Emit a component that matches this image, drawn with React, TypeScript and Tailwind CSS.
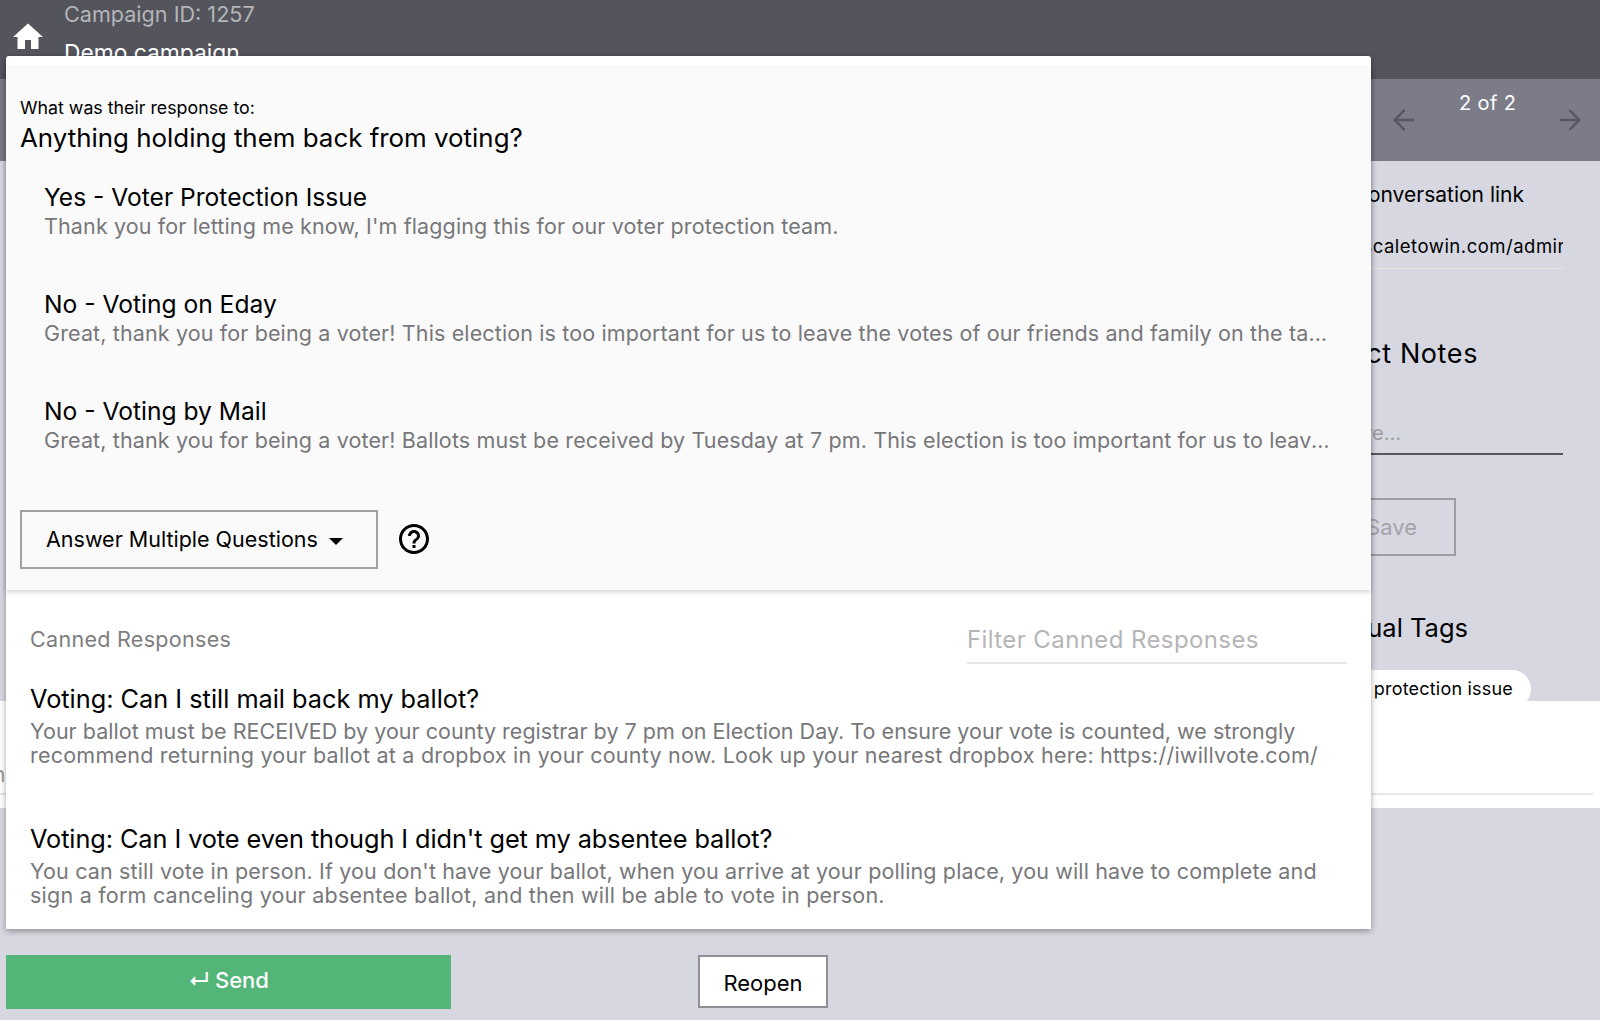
import { ArrowLeft, ArrowRight } from 'lucide-react';
import { MdHome, MdHelpOutline } from 'react-icons/md';

const answers = [
  {
    title: 'Yes - Voter Protection Issue',
    text: "Thank you for letting me know, I'm flagging this for our voter protection team.",
  },
  {
    title: 'No - Voting on Eday',
    text: 'Great, thank you for being a voter! This election is too important for us to leave the votes of our friends and family on the table this time around.',
  },
  {
    title: 'No - Voting by Mail',
    text: 'Great, thank you for being a voter! Ballots must be received by Tuesday at 7 pm. This election is too important for us to leave the votes of our friends on the table.',
  },
];

export default function App() {
  return (
    <div className="relative w-[1600px] h-[1020px] overflow-hidden bg-[#d6d7e0] flex flex-col font-['Inter',sans-serif] text-black">
      <header className="h-[79px] shrink-0 bg-[#53545c] flex items-start pl-[10px]">
        <MdHome className="w-[36px] h-[36px] mt-[19px] text-white shrink-0" />
        <div className="ml-[18px] whitespace-nowrap">
          <div className="text-[21.6px] leading-[28px] text-[#b4b5b8]">Campaign ID: 1257</div>
          <div className="text-[22.8px] leading-[28px] text-white mt-[11px]">Demo campaign</div>
        </div>
      </header>

      <div className="h-[82px] shrink-0 bg-[#7b7c88] flex justify-end pr-[14px]">
        <div className="w-[198px] relative flex items-center justify-between">
          <ArrowLeft className="w-[32px] h-[32px] text-[#55565f]" strokeWidth={1.8} />
          <div className="absolute left-[71px] top-[10px] text-[20px] leading-[28px] text-white tracking-[0.4px]">2 of 2</div>
          <ArrowRight className="w-[32px] h-[32px] text-[#55565f]" strokeWidth={1.8} />
        </div>
      </div>

      <div className="h-[540px] shrink-0 overflow-hidden flex justify-end pr-[37px]">
        <div className="w-[290px] flex flex-col items-end">
          <div className="shrink-0 w-full text-right text-[21px] leading-[28px] pr-[39px] mt-[20px] whitespace-nowrap">Conversation link</div>
          <div className="shrink-0 w-full h-[38px] mt-[22px] border-b border-[#e6e6df] overflow-hidden flex justify-end">
            <span className="text-[18.5px] leading-[28px] mt-[1px] whitespace-nowrap mr-[-6px] tracking-[0.5px]">https://app.scaletowin.com/admin</span>
          </div>
          <div className="shrink-0 w-full text-right text-[27px] leading-[36px] pr-[85px] mt-[67px] whitespace-nowrap tracking-[0.6px]">Contact Notes</div>
          <div className="shrink-0 w-full h-[44px] mt-[39px] border-b-2 border-[#55565c] text-[20px] leading-[28px] text-[#9b9ca2] flex justify-end pr-[162px] pt-[8px] whitespace-nowrap">
            <span className="shrink-0">Add note here...</span>
          </div>
          <div className="shrink-0 h-[58px] w-[180px] mr-[107px] mt-[43px] border-2 border-[#9c9da2] text-[#a3a4a9] text-[22px] flex items-center justify-end pr-[37px]">Save</div>
          <div className="shrink-0 w-full text-right text-[25.5px] leading-[36px] pr-[95px] mt-[54px] whitespace-nowrap">Manual Tags</div>
          <div className="shrink-0 h-[38px] mt-[24px] mr-[32px] rounded-full bg-white text-[18px] leading-[38px] pr-[18px] pl-[40px] whitespace-nowrap tracking-[0.2px]">voter protection issue</div>
        </div>
      </div>

      <div className="h-[107px] shrink-0 bg-white pr-[7px] relative">
        <div className="h-[94px] border-b-2 border-[#e8e8ea]" />
        <span className="absolute left-[-7px] top-[60px] text-[21px] leading-[28px] text-[#999999]">n</span>
      </div>

      <div className="flex-1 flex items-start pt-[147px] pl-[6px]">
        <button className="w-[445px] h-[54px] bg-[#53b678] text-white text-[22px] font-medium flex items-center justify-center gap-[5px] pb-[4px]">
          <span>↵</span>
          <span>Send</span>
        </button>
        <button className="ml-[247px] w-[130px] h-[53px] bg-white border-2 border-[#8f9095] text-[22px] pt-[3px]">Reopen</button>
      </div>

      <div className="absolute left-[6px] top-[56px] w-[1365px] h-[873px] bg-white rounded-t-[3px] shadow-[0_2px_6px_rgba(0,0,0,0.35)] flex flex-col">
        <section className="h-[523px] mt-[11px] shrink-0 bg-[#fafafa] shadow-[0_2px_5px_rgba(0,0,0,0.18)] pl-[14px] pt-[29px]">
          <div className="text-[17.8px] leading-[24px]">What was their response to:</div>
          <h2 className="text-[25.9px] leading-[36px]">Anything holding them back from voting?</h2>
          <div className="pl-[24px] pt-[25px]">
            {answers.map((a) => (
              <div key={a.title} className="h-[107px]">
                <div className="text-[24.6px] leading-[32px]">{a.title}</div>
                <div className="w-[1290px] mt-[-1px] truncate text-[21.5px] leading-[28px] text-[#77777a] tracking-[0.13px]">{a.text}</div>
              </div>
            ))}
          </div>
          <div className="flex items-center mt-[8px]">
            <button className="w-[358px] h-[59px] border-2 border-[#a0a0a0] text-[21.5px] flex items-center pl-[24px]">
              Answer Multiple Questions
              <span className="ml-[11px] mt-[3px] border-x-[7px] border-x-transparent border-t-[7px] border-t-black" />
            </button>
            <MdHelpOutline className="ml-[18px] mt-[-2px] w-[36px] h-[36px]" />
          </div>
        </section>

        <section className="flex-1 px-[24px]">
          <div className="flex items-start justify-between h-[73px] pt-[35px]">
            <div className="text-[21.5px] leading-[28px] text-[#7d7d80] tracking-[0.3px]">Canned Responses</div>
            <div className="w-[380px] h-[41px] mt-[-2px] border-b-2 border-[#e6e6e6] text-[24px] leading-[34px] text-[#b5b5b5] tracking-[0.4px]">Filter Canned Responses</div>
          </div>
          <div className="text-[25.3px] leading-[34px] mt-[19px]">Voting: Can I still mail back my ballot?</div>
          <div className="text-[21.5px] leading-[23.5px] text-[#77777a] mt-[4px] whitespace-nowrap">
            <span className="block tracking-[0.02px]">Your ballot must be RECEIVED by your county registrar by 7 pm on Election Day. To ensure your vote is counted, we strongly</span>
            <span className="block tracking-[0.23px]">recommend returning your ballot at a dropbox in your county now. Look up your nearest dropbox here: https://iwillvote.com/</span>
          </div>
          <div className="text-[25.3px] leading-[34px] mt-[55px] tracking-[-0.08px]">Voting: Can I vote even though I didn't get my absentee ballot?</div>
          <div className="text-[21.5px] leading-[23.5px] text-[#77777a] mt-[4px] whitespace-nowrap">
            <span className="block tracking-[0.14px]">You can still vote in person. If you don't have your ballot, when you arrive at your polling place, you will have to complete and</span>
            <span className="block tracking-[0.23px]">sign a form canceling your absentee ballot, and then will be able to vote in person.</span>
          </div>
        </section>
      </div>
    </div>
  );
}
